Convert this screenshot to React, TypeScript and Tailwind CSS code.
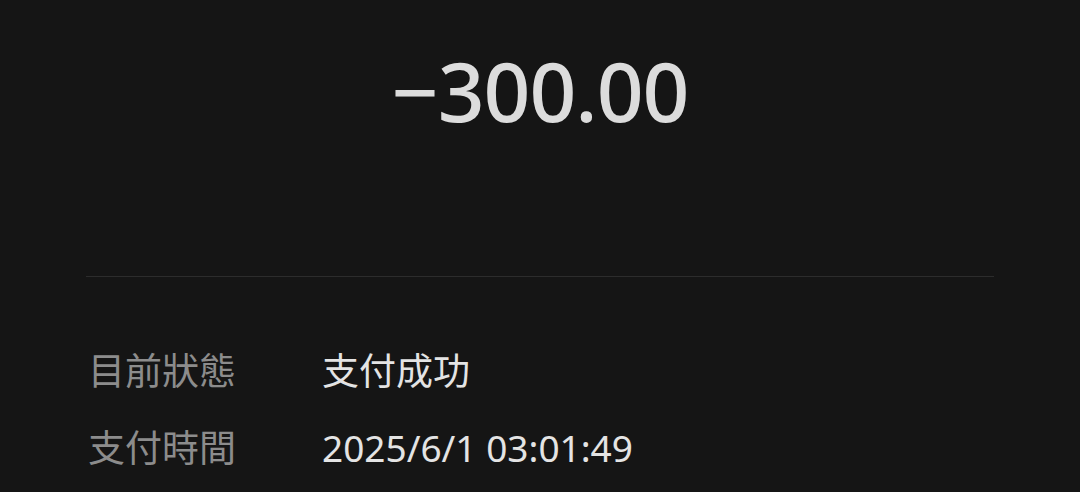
export default function App() {
  return (
    <div
      className="w-[1080px] h-[492px] overflow-hidden bg-[#151515]"
      style={{ fontFamily: '"Noto Sans", "Noto Sans CJK TC", sans-serif' }}
    >
      <div className="h-[276px] flex flex-col items-center pt-[40px]">
        <div className="text-[82px] leading-[100px] font-medium text-[#dcdcdc] tracking-[-1px]">−300.00</div>
      </div>
      <div className="mx-[86px] h-px bg-[#2c2c2c]" />
      <div className="px-[88px] pt-[70px] flex flex-col gap-[29px]">
        <div className="flex items-center h-[48px] text-[37px]">
          <div className="w-[234px] text-[#8c8c8c]">目前狀態</div>
          <div className="text-[#e4e4e4]">支付成功</div>
        </div>
        <div className="flex items-center h-[48px] text-[37px]">
          <div className="w-[234px] text-[#8c8c8c]">支付時間</div>
          <div className="text-[#e4e4e4]">2025/6/1 03:01:49</div>
        </div>
      </div>
    </div>
  );
}
